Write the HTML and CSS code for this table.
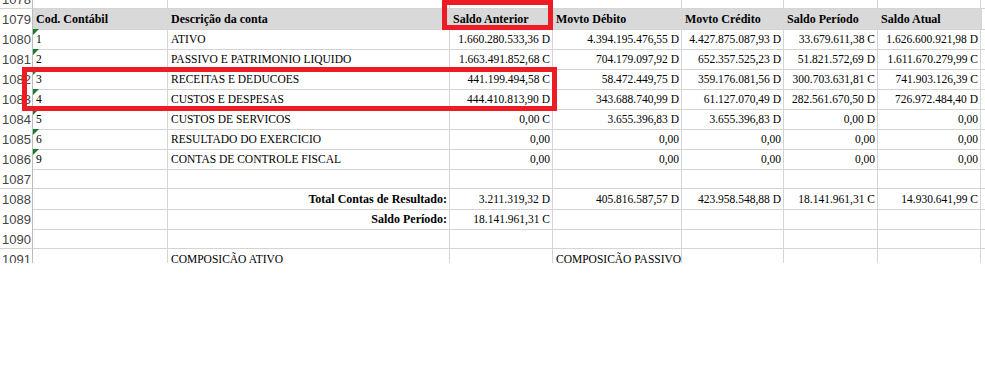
FILE: index.html
```html
<!DOCTYPE html>
<html lang="pt">
<head>
<meta charset="utf-8">
<title>Balancete</title>
<link rel="stylesheet" href="styles.css">
</head>
<body>
<div class="sheet">
  <div class="grid">
    <div class="row"><div class="rh">1078</div><div class="c"></div><div class="c"></div><div class="c"></div><div class="c"></div><div class="c"></div><div class="c"></div><div class="c"></div><div class="c"></div></div>
    <div class="row head"><div class="rh">1079</div><div class="c h">Cod. Contábil</div><div class="c h">Descrição da conta</div><div class="c h">Saldo Anterior</div><div class="c h">Movto Débito</div><div class="c h">Movto Crédito</div><div class="c h">Saldo Período</div><div class="c h">Saldo Atual</div><div class="c blank"></div></div>
    <div class="row"><div class="rh">1080</div><div class="c code">1</div><div class="c">ATIVO</div><div class="c n">1.660.280.533,36 D</div><div class="c n">4.394.195.476,55 D</div><div class="c n">4.427.875.087,93 D</div><div class="c n">33.679.611,38 C</div><div class="c n">1.626.600.921,98 D</div><div class="c"></div></div>
    <div class="row"><div class="rh">1081</div><div class="c code">2</div><div class="c">PASSIVO E PATRIMONIO LIQUIDO</div><div class="c n">1.663.491.852,68 C</div><div class="c n">704.179.097,92 D</div><div class="c n">652.357.525,23 D</div><div class="c n">51.821.572,69 D</div><div class="c n">1.611.670.279,99 C</div><div class="c"></div></div>
    <div class="row"><div class="rh">1082</div><div class="c code">3</div><div class="c">RECEITAS E DEDUCOES</div><div class="c n">441.199.494,58 C</div><div class="c n">58.472.449,75 D</div><div class="c n">359.176.081,56 D</div><div class="c n">300.703.631,81 C</div><div class="c n">741.903.126,39 C</div><div class="c"></div></div>
    <div class="row"><div class="rh">1083</div><div class="c code">4</div><div class="c">CUSTOS E DESPESAS</div><div class="c n">444.410.813,90 D</div><div class="c n">343.688.740,99 D</div><div class="c n">61.127.070,49 D</div><div class="c n">282.561.670,50 D</div><div class="c n">726.972.484,40 D</div><div class="c"></div></div>
    <div class="row"><div class="rh">1084</div><div class="c code">5</div><div class="c">CUSTOS DE SERVICOS</div><div class="c n">0,00 C</div><div class="c n">3.655.396,83 D</div><div class="c n">3.655.396,83 D</div><div class="c n">0,00 D</div><div class="c n">0,00</div><div class="c"></div></div>
    <div class="row"><div class="rh">1085</div><div class="c code">6</div><div class="c">RESULTADO DO EXERCICIO</div><div class="c n">0,00</div><div class="c n">0,00</div><div class="c n">0,00</div><div class="c n">0,00</div><div class="c n">0,00</div><div class="c"></div></div>
    <div class="row"><div class="rh">1086</div><div class="c code">9</div><div class="c">CONTAS DE CONTROLE FISCAL</div><div class="c n">0,00</div><div class="c n">0,00</div><div class="c n">0,00</div><div class="c n">0,00</div><div class="c n">0,00</div><div class="c"></div></div>
    <div class="row"><div class="rh">1087</div><div class="c"></div><div class="c"></div><div class="c"></div><div class="c"></div><div class="c"></div><div class="c"></div><div class="c"></div><div class="c"></div></div>
    <div class="row"><div class="rh">1088</div><div class="c"></div><div class="c n b">Total Contas de Resultado:</div><div class="c n">3.211.319,32 D</div><div class="c n">405.816.587,57 D</div><div class="c n">423.958.548,88 D</div><div class="c n">18.141.961,31 C</div><div class="c n">14.930.641,99 C</div><div class="c"></div></div>
    <div class="row"><div class="rh">1089</div><div class="c"></div><div class="c n b">Saldo Período:</div><div class="c n">18.141.961,31 C</div><div class="c"></div><div class="c"></div><div class="c"></div><div class="c"></div><div class="c"></div></div>
    <div class="row"><div class="rh">1090</div><div class="c"></div><div class="c"></div><div class="c"></div><div class="c"></div><div class="c"></div><div class="c"></div><div class="c"></div><div class="c"></div></div>
    <div class="row"><div class="rh">1091</div><div class="c"></div><div class="c">COMPOSIÇÃO ATIVO</div><div class="c"></div><div class="c">COMPOSIÇÃO PASSIVO</div><div class="c"></div><div class="c"></div><div class="c"></div><div class="c"></div></div>
  </div>
  <div class="mark mark-head"></div>
  <div class="mark mark-rows"></div>
</div>
</body>
</html>
```

FILE: styles.css
```css
* { box-sizing: border-box; }

html, body {
  margin: 0;
  padding: 0;
  background: #ffffff;
}

.sheet {
  position: relative;
  height: 263px;
  overflow: hidden;
  background: #ffffff;
}

.grid {
  margin-top: -11px;
}

.row {
  display: grid;
  grid-template-columns: 33px 135px 282px 103px 129px 102px 94px 103px 1fr;
  height: 20px;
}

.rh {
  font-family: "Liberation Sans", Arial, sans-serif;
  font-size: 13px;
  line-height: 19px;
  color: #444444;
  text-align: right;
  padding-right: 1px;
  padding-top: 1px;
  border-right: 1px solid #bcbcbc;
  border-bottom: 1px solid #d4d4d4;
  background: #ffffff;
  white-space: nowrap;
  overflow: hidden;
}

.c {
  position: relative;
  font-family: "Liberation Serif", "Times New Roman", serif;
  font-size: 11.5px;
  line-height: 19px;
  padding: 1px 2px 0 3px;
  color: #000000;
  border-right: 1px solid #d4d4d4;
  border-bottom: 1px solid #d4d4d4;
  white-space: nowrap;
  overflow: visible;
}

.head .c {
  background: #d9d9d9;
  border-right-color: #d9d9d9;
  border-bottom-color: #d4d4d4;
}

.head .c.blank {
  background: #ffffff;
  border-left: 1px solid #d4d4d4;
}

.h {
  font-weight: bold;
  font-size: 12px;
}

.n {
  text-align: right;
  padding-right: 2px;
}

.b {
  font-weight: bold;
  font-size: 12px;
}

.code::before {
  content: "";
  position: absolute;
  left: 0;
  top: 0;
  width: 0;
  height: 0;
  border-top: 6px solid #1f7a36;
  border-right: 6px solid transparent;
}

.mark {
  position: absolute;
  border: 5px solid #ed1c24;
}

.mark-head {
  left: 442px;
  top: 0;
  width: 111px;
  height: 30px;
}

.mark-rows {
  left: 22px;
  top: 67px;
  width: 535px;
  height: 44px;
}
```
